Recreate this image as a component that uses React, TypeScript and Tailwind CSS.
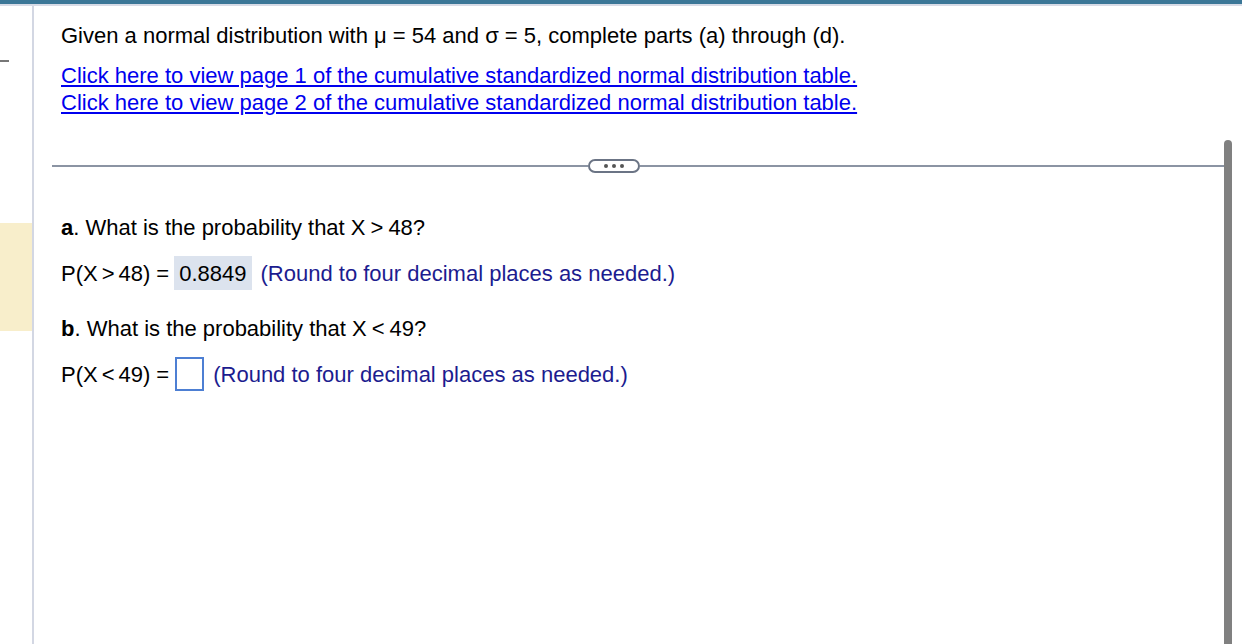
export default function App() {
  return (
    <main
      className="relative flex h-[644px] w-[1242px] flex-col overflow-hidden bg-white text-[22px] text-black"
      style={{ fontFamily: '"Liberation Sans", Arial, sans-serif' }}
    >
      {/* top bar */}
      <div className="h-[4px] w-full shrink-0 bg-[#3b7797]" />
      <div className="h-[2px] w-full shrink-0 bg-[#d7dbe6]" />

      <div className="flex flex-1">
        {/* left gutter */}
        <div className="flex w-[32px] shrink-0 flex-col">
          <div className="mt-[54px] h-[2px] w-[9px] bg-[#777]" />
          <div className="mt-[161px] h-[108px] w-full bg-[#f8eecb]" />
        </div>
        <div className="w-[2px] shrink-0 bg-[#d3d7e3]" />

        {/* content */}
        <div className="flex flex-1 flex-col">
          <div className="pl-[27px] pt-[16px]">
            <p className="leading-[27px]">
              Given a normal distribution with μ = 54 and σ = 5, complete parts (a) through (d).
            </p>
            <div className="mt-[13px] flex flex-col leading-[27px] text-[#0000ee]">
              <a className="w-fit underline underline-offset-2" href="#">
                Click here to view page 1 of the cumulative standardized normal distribution table.
              </a>
              <a className="w-fit underline underline-offset-2" href="#">
                Click here to view page 2 of the cumulative standardized normal distribution table.
              </a>
            </div>
          </div>

          {/* divider */}
          <div className="ml-[18px] mt-[43px] flex items-center">
            <div className="h-[2px] w-[536px] bg-[#8b94a3]" />
            <div className="flex h-[14px] w-[52px] items-center justify-center gap-[4px] rounded-full border-[2px] border-[#6b7485] bg-white">
              <span className="h-[4px] w-[4px] rounded-full bg-[#555]" />
              <span className="h-[4px] w-[4px] rounded-full bg-[#555]" />
              <span className="h-[4px] w-[4px] rounded-full bg-[#555]" />
            </div>
            <div className="h-[2px] w-[584px] bg-[#8b94a3]" />
          </div>

          {/* questions */}
          <div className="flex flex-col pl-[27px] pt-[41px]">
            <p className="leading-[27px]">
              <b>a</b>. What is the probability that X<span className="mx-[5px]">&gt;</span>48?
            </p>
            <div className="mt-[15px] flex items-center">
              <span>P(X<span className="mx-[4px]">&gt;</span>48)<span className="ml-[6px]">=</span></span>
              <span className="ml-[5px] flex h-[34px] items-center bg-[#dce3ee] px-[5px]">0.8849</span>
              <span className="ml-[9px] text-[#1c1c8f]">(Round to four decimal places as needed.)</span>
            </div>
            <p className="mt-[25px] leading-[27px]">
              <b>b</b>. What is the probability that X<span className="mx-[5px]">&lt;</span>49?
            </p>
            <div className="mt-[15px] flex items-center">
              <span>P(X<span className="mx-[4px]">&lt;</span>49)<span className="ml-[6px]">=</span></span>
              <span className="ml-[6px] h-[34px] w-[29px] border-[2px] border-[#4d7fd3] bg-white" />
              <span className="ml-[9px] text-[#1c1c8f]">(Round to four decimal places as needed.)</span>
            </div>
          </div>
        </div>

        {/* scrollbar */}
        <div className="flex w-[18px] shrink-0 flex-col pr-[10px] pt-[134px]">
          <div className="w-[8px] flex-1 rounded-t-full bg-[#808080]" />
        </div>
      </div>
    </main>
  );
}
